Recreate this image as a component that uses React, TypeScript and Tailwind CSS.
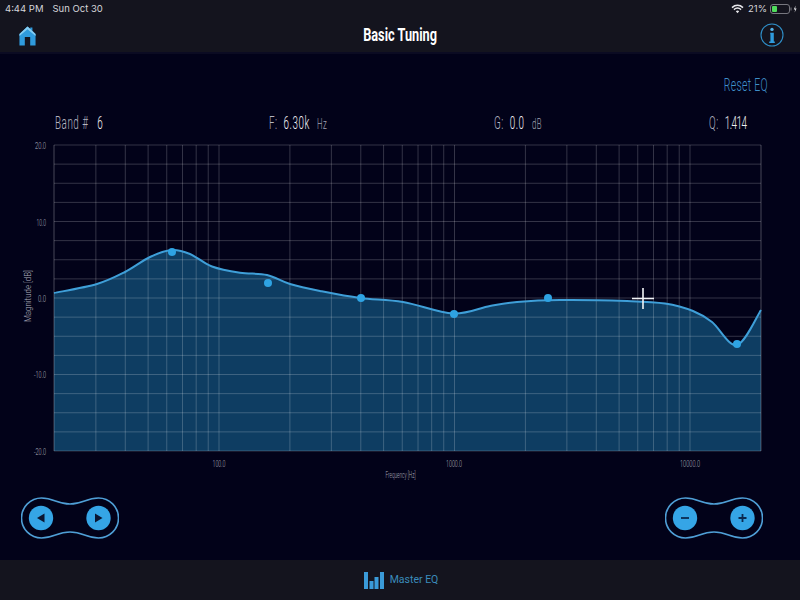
import React from "react";

const XP = 54, XE = 761, YT = 145, YB = 451;
const logX = (f: number) => 219 + 235.5 * Math.log10(f / 100);
const freqs: number[] = [];
for (const d of [10, 100, 1000, 10000]) for (let n = 1; n <= 9; n++) { const f = d * n; if (f > 20 && f < 20000) freqs.push(f); }
const hLines = Array.from({ length: 17 }, (_, i) => YT + (i * (YB - YT)) / 16);

const pts: [number, number][] = [
  [54, 293], [97, 284], [125, 272], [150, 257], [172, 250], [190, 254], [212, 266.5], [240, 272.7], [267, 275], [290, 284],
  [320, 291], [360, 298], [403, 302], [453, 313.5], [490, 306], [517, 302], [560, 300], [627, 301], [665, 303.5], [693, 311], [712, 322], [737, 345], [761, 310],
];
function curve(p: [number, number][]) {
  let d = `M${p[0][0]} ${p[0][1]}`;
  for (let i = 0; i < p.length - 1; i++) {
    const a = p[Math.max(i - 1, 0)], b = p[i], c = p[i + 1], e = p[Math.min(i + 2, p.length - 1)];
    const c1x = b[0] + (c[0] - a[0]) / 6, c1y = b[1] + (c[1] - a[1]) / 6;
    const c2x = c[0] - (e[0] - b[0]) / 6, c2y = c[1] - (e[1] - b[1]) / 6;
    d += `C${c1x.toFixed(1)} ${c1y.toFixed(1)} ${c2x.toFixed(1)} ${c2y.toFixed(1)} ${c[0]} ${c[1]}`;
  }
  return d;
}
const line = curve(pts);
const dots: [number, number][] = [[172, 252], [268, 283], [361, 298], [454, 314], [548, 298], [737, 344]];

function Label({ x, y, w, children, anchor = "start", fs = 8.5 }: { x: number; y: number; w: number; children: string; anchor?: "start" | "middle" | "end"; fs?: number }) {
  return <text x={x} y={y} textLength={w} lengthAdjust="spacingAndGlyphs" textAnchor={anchor} fontSize={fs} fontWeight={300} fill="#b0b0be" fontFamily="Roboto, sans-serif">{children}</text>;
}

function Chart() {
  return (
    <svg viewBox="0 132 800 350" width={800} height={350} className="block">
      <path d={`${line}L${XE} ${YB}L${XP} ${YB}Z`} fill="#0e3d62" />
      {hLines.map((y) => <line key={y} x1={XP} x2={XE} y1={y} y2={y} stroke="#ffffff" strokeOpacity={0.2} strokeWidth={1} />)}
      {freqs.map((f) => <line key={f} x1={logX(f)} x2={logX(f)} y1={YT} y2={YB} stroke="#ffffff" strokeOpacity={0.2} strokeWidth={1} />)}
      <line x1={XP} x2={XP} y1={YT} y2={YB} stroke="#ffffff" strokeOpacity={0.28} />
      <line x1={XE} x2={XE} y1={YT} y2={YB} stroke="#ffffff" strokeOpacity={0.28} />
      <path d={line} fill="none" stroke="#3f9fd8" strokeWidth={2} />
      {dots.map(([x, y]) => <circle key={x} cx={x} cy={y} r={4} fill="#2ea3e3" />)}
      <path d="M632 298.5H654M643 288V309" stroke="#f2f4f7" strokeWidth={1.6} fill="none" />
      <Label x={46} y={149} w={11} anchor="end">20.0</Label>
      <Label x={46} y={226} w={9.5} anchor="end">10.0</Label>
      <Label x={46} y={302} w={8} anchor="end">0.0</Label>
      <Label x={46} y={378} w={12} anchor="end">-10.0</Label>
      <Label x={46} y={455} w={12} anchor="end">-20.0</Label>
      <Label x={219} y={467} w={13} anchor="middle">100.0</Label>
      <Label x={454} y={467} w={16} anchor="middle">1000.0</Label>
      <Label x={690} y={467} w={20} anchor="middle">10000.0</Label>
      <Label x={400.5} y={478} w={30} anchor="middle">Frequency [Hz]</Label>
      <g transform="translate(31 296) rotate(-90)"><Label x={0} y={0} w={52} anchor="middle" fs={9}>Magnitude [dB]</Label></g>
    </svg>
  );
}

function Pill({ children }: { children: React.ReactNode }) {
  return (
    <svg width={98} height={42} viewBox="0 0 98 42" className="block">
      <path d="M20.5 1C33 1 36 7 49 7C62 7 65 1 77.5 1A20 20 0 0 1 77.5 41C65 41 62 35 49 35C36 35 33 41 20.5 41A20 20 0 0 1 20.5 1Z" fill="none" stroke="#4f9fd6" strokeWidth={1.6} />
      <circle cx={20} cy={21} r={12.2} fill="#35a5e6" />
      <circle cx={77.5} cy={21} r={12.2} fill="#35a5e6" />
      {children}
    </svg>
  );
}

function Readout({ label, value, unit, className, valueClass = "" }: { label: string; value: string; unit?: string; className: string; valueClass?: string }) {
  return (
    <div className={`${className} text-[19px] leading-[20px] font-light text-[#b4b4c0]`}>
      <span className="inline-block whitespace-pre origin-left scale-x-[0.52] tracking-[1px]">
        {label}
        <span className={`text-[#eeeef2] ${valueClass}`}>{value}</span>
        {unit ? <span className="text-[15px] text-[#a4a4b4]">{unit}</span> : null}
      </span>
    </div>
  );
}

export default function App() {
  return (
    <div className="w-[800px] h-[600px] flex flex-col overflow-hidden bg-[#020219] font-['Roboto',sans-serif]">
      <header className="h-[54px] shrink-0 bg-[#14141e] border-b-2 border-[#0b0b22] flex flex-col">
        <div className="h-[18px] flex items-center justify-between pl-[5px] pr-[3px] text-[9.5px] text-[#d5d5da] font-['Inter',sans-serif]">
          <div className="flex gap-[9px]"><span>4:44 PM</span><span>Sun Oct 30</span></div>
          <div className="flex items-center gap-[4px]">
            <svg width={13} height={10} viewBox="0 0 13 10"><path d="M1 3.6C4.3.6 8.7.6 12 3.6M2.9 5.6C5 3.8 8 3.8 10.1 5.6" fill="none" stroke="#e8e8ec" strokeWidth={1.5} /><path d="M4.8 7.2C5.8 6.4 7.2 6.4 8.2 7.2L6.5 9.2Z" fill="#e8e8ec" /></svg>
            <span>21%</span>
            <svg width={27} height={10} viewBox="0 0 27 10" className="ml-[-1px]">
              <rect x={0.5} y={0.5} width={19} height={9} rx={2.5} fill="none" stroke="#77777f" />
              <rect x={2} y={2} width={5} height={6} rx={1} fill="#4fdc5c" />
              <rect x={20.5} y={3.5} width={1} height={3} fill="#77777f" />
              <path d="M25.6 1.5L23.8 5.4H25.2L24.6 8.6L26.6 4.4H25.2Z" fill="#e8e8ec" />
            </svg>
          </div>
        </div>
        <div className="flex-1 flex items-center pl-[19px] pr-[16px]">
          <svg width={17} height={20} viewBox="0 0 19 21" preserveAspectRatio="none" className="mt-[2px]">
            <path d="M9.5 0.5L12.6 3V1.5H15V5L18.5 8.5V20.5H12.5V11.5H6.5V20.5H0.5V8.5Z" fill="#2f9bdd" />
            <path d="M9.5 0.5L0.5 8.5V10.5L9.5 3.4L18.5 10.5V8.5Z" fill="#86cdf2" />
          </svg>
          <h1 className="flex-1 text-center text-white font-bold text-[19px] leading-[20px] pb-[1px] pl-[5px]">
            <span className="inline-block scale-x-[0.67] whitespace-pre">Basic Tuning</span>
          </h1>
          <svg width={24} height={24} viewBox="0 0 24 24">
            <circle cx={12} cy={12} r={11} fill="none" stroke="#2f8fc8" strokeWidth={1.1} />
            <circle cx={12} cy={6.4} r={1.7} fill="#55b4ea" />
            <path d="M10.2 9.8H13.8V18.5H14.8V20H9.2V18.5H10.4V11.2H10.2Z" fill="#2f9bdd" />
          </svg>
        </div>
      </header>

      <main className="flex-1 flex flex-col min-h-0">
        <div className="h-[22px] mt-[19px] flex items-center justify-end pr-[32px] text-[18px] text-[#3f8fc9] font-light">
          <span className="inline-block whitespace-pre scale-x-[0.58] origin-right tracking-[0.5px]">Reset EQ</span>
        </div>
        <div className="mt-[18px] h-[20px] pl-[55px] flex">
          <Readout className="w-[214px]" label="Band #   " value="6" />
          <Readout className="w-[225px]" label="F:  " value="6.30k" unit="   Hz" />
          <Readout className="w-[215px]" label="G:  " value="0.0" unit="   dB" />
          <Readout className="w-[60px]" label="Q:  " value="1.414" valueClass="tracking-[-1px]" />
        </div>
        <div className="mt-[-1px]"><Chart /></div>
        <div className="mt-[15px] flex justify-between pl-[21px] pr-[37px]">
          <Pill>
            <path d="M16 21L23.5 16.5V25.5Z" fill="#0b1530" />
            <path d="M81.5 21L74 16.5V25.5Z" fill="#0b1530" />
          </Pill>
          <Pill>
            <path d="M16 21H24" stroke="#0b2a50" strokeWidth={1.8} />
            <path d="M73.5 21H81.5M77.5 17V25" stroke="#0b2a50" strokeWidth={1.8} />
          </Pill>
        </div>
      </main>

      <footer className="h-[40px] shrink-0 bg-[#14141e] flex items-center justify-center gap-[6px] pl-[2px]">
        <svg width={20} height={18} viewBox="0 0 20 18">
          <rect x={0} y={1} width={4} height={17} fill="#3a9ad8" />
          <rect x={5.5} y={10} width={4} height={8} fill="#3a9ad8" />
          <rect x={10.5} y={6} width={4} height={12} fill="#3a9ad8" />
          <rect x={16} y={1} width={4} height={17} fill="#3a9ad8" />
        </svg>
        <span className="text-[10.5px] text-[#3b8cbc]">Master EQ</span>
      </footer>
    </div>
  );
}
